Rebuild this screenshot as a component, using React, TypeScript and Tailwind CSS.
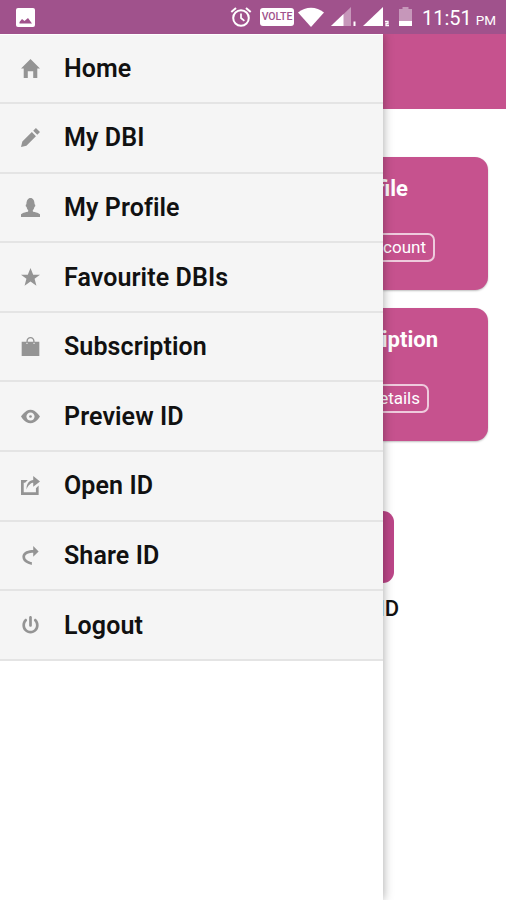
import React from 'react';

const shapes: Record<string, React.ReactNode> = {
  home: <polygon points="7,0 0,7 2,7 2,14 5,14 5,9 9,9 9,14 12,14 12,7 14,7" />,
  edit: <path d="M1,10l-1,4l4-1l7-7L8,3L1,10z M11,0L9,2l3,3l2-2L11,0z" />,
  user: (
    <path d="M8.851,10.101c-0.18-0.399-0.2-0.763-0.153-1.104C9.383,8.49,9.738,7.621,9.891,6.465C10.493,6.355,10.5,5.967,10.5,5.5c0-0.437-0.008-0.804-0.502-0.94C9.999,4.539,10,4.521,10,4.5c0-2.6-1.2-4.5-3-4.5S4,1.877,4,4.5c0,0.021,0.001,0.039,0.002,0.06C3.508,4.696,3.5,5.063,3.5,5.5c0,0.467,0.007,0.855,0.609,0.965C4.262,7.621,4.617,8.49,5.303,8.997c0.047,0.341,0.026,0.704-0.153,1.104C1.503,10.503,0,12,0,12v2h14v-2C14,12,12.497,10.503,8.851,10.101z" />
  ),
  star: <polygon points="14,5 9,5 7,0 5,5 0,5 4,8 2.625,13 7,10 11.375,13 10,8" />,
  shop: (
    <path d="M10,3.5V3C10,1.3,8.7,0,7,0S4,1.3,4,3v0.5H0.5V14h13V3.5H10z M5,3c0-1.1,0.9-2,2-2s2,0.9,2,2v0.5H5V3z M4,4.2h0.8v0.9H4z M9.2,4.2H10v0.9H9.2z" fillRule="evenodd" />
  ),
  eye: (
    <>
      <path d="M7,2C3,2,0,7,0,7s3,5,7,5s7-5,7-5S11,2,7,2z M7,10c-1.657,0-3-1.344-3-3c0-1.657,1.343-3,3-3s3,1.343,3,3C10,8.656,8.657,10,7,10z" fillRule="evenodd" />
      <circle cx="7" cy="7" r="1" />
    </>
  ),
  action: <path d="M9,5v3l5-4L9,0v3c0,0-5,0-5,7C6,5,9,5,9,5z M11,12H2V5h1l2-2H0v11h13V7l-2,2V12z" />,
  forward: <path d="M13,4L9,0v3C6,3,1,4,1,8c0,5,7,6,7,6v-2c0,0-5-1-5-4s6-3,6-3v3L13,4z" />,
  power: (
    <path d="M11.243,2.408c-0.392-0.401-1.024-0.401-1.415,0c-0.391,0.401-0.391,1.054,0,1.455C10.584,4.642,11,5.675,11,6.773s-0.416,2.133-1.172,2.91c-1.512,1.558-4.145,1.558-5.656,0C3.416,8.904,3,7.872,3,6.773c0-1.099,0.416-2.132,1.172-2.91c0.391-0.401,0.391-1.054,0-1.455c-0.391-0.401-1.023-0.401-1.415,0C1.624,3.574,1,5.125,1,6.773c0,1.647,0.624,3.199,1.757,4.365c1.134,1.166,2.64,1.809,4.243,1.809c1.604,0,3.109-0.645,4.243-1.811C12.376,9.975,13,8.423,13,6.773C13,5.125,12.376,3.574,11.243,2.408zM7,8c0.553,0,1-0.447,1-1V1c0-0.553-0.447-1-1-1S6,0.447,6,1v6C6,7.553,6.447,8,7,8z" />
  ),
};

const items = [
  { icon: 'home', label: 'Home' },
  { icon: 'edit', label: 'My DBI' },
  { icon: 'user', label: 'My Profile' },
  { icon: 'star', label: 'Favourite DBIs' },
  { icon: 'shop', label: 'Subscription' },
  { icon: 'eye', label: 'Preview ID' },
  { icon: 'action', label: 'Open ID' },
  { icon: 'forward', label: 'Share ID' },
  { icon: 'power', label: 'Logout' },
];

function StatusBar() {
  return (
    <header className="relative z-20 flex h-[34px] shrink-0 items-center bg-[#a0528c] text-white">
      <svg className="ml-4 h-[19px] w-[19px]" viewBox="0 0 19 19">
        <rect width="19" height="19" rx="2" fill="#fff" />
        <path d="M3.500 15.500v-1.500l2.500-3 2.500 2L12 10l4 5.500z" fill="#a0528c" />
      </svg>
      <svg className="ml-[195px] h-[22px] w-[22px]" viewBox="0 0 22 22" fill="none" stroke="#fff">
        <circle cx="11" cy="12" r="7.8" strokeWidth="2" />
        <path d="M11 7.5V12l3.4 2.800" strokeWidth="1.7" />
        <path d="M1.3 6L6 2M16 2l4.700 4" strokeWidth="2" />
      </svg>
      <span className="ml-[8px] flex h-[18px] w-[34px] items-center justify-center rounded-[3px] bg-white text-[10.5px] leading-none font-medium text-[#a0528c]">
        VOLTE
      </span>
      <svg className="ml-[4px] h-[20px] w-[26px]" viewBox="0 0 26 20">
        <path d="M0 5.5C7.5-1 18.500-1 26 5.500L13 20z" fill="#fff" />
      </svg>
      <svg className="ml-[7px] h-[20px] w-[28px]" viewBox="0 0 28 20">
        <path d="M0 19L20 0v19z" fill="#fff" opacity=".4" />
        <path d="M0 19L12.500 7v12z" fill="#fff" />
        <rect x="22.500" y="14.500" width="2" height="4.500" fill="#fff" />
      </svg>
      <svg className="ml-[4px] h-[20px] w-[28px]" viewBox="0 0 28 20">
        <path d="M0 19L20 0v19z" fill="#fff" />
        <path d="M22 14.500h3v2h-2v2h3" fill="none" stroke="#fff" strokeWidth="1.300" />
      </svg>
      <svg className="ml-[8px] h-[20px] w-[13px]" viewBox="0 0 13 20">
        <path d="M3.500 0h6v2H13v12H0V2h3.500z" fill="#fff" opacity=".4" />
        <path d="M0 14h13v5H0z" fill="#fff" />
      </svg>
      <span className="ml-[10px] pt-[2px] text-[20px] leading-none whitespace-nowrap">
        11:51<span className="ml-[4px] text-[13.5px]">PM</span>
      </span>
    </header>
  );
}

function Drawer() {
  return (
    <nav className="z-10 w-[383px] shrink-0 bg-white pt-[0.5px] shadow-[0_0_10px_rgba(0,0,0,0.36)]">
      {items.map((item) => (
        <div key={item.label} className="flex h-[69.6px] items-center border-b-2 border-[#e4e4e4] bg-[#f5f5f5] pl-[20.5px]">
          <svg className="h-[19px] w-[19px] shrink-0" viewBox="0 0 14 14" fill="#949494">
            {shapes[item.icon]}
          </svg>
          <span className="ml-[24.5px] text-[25px] leading-none font-semibold tracking-[0.1px] whitespace-nowrap text-[#111]">{item.label}</span>
        </div>
      ))}
    </nav>
  );
}

function Card({ title, action, titleGap, actionGap }: { title: string; action: string; titleGap: string; actionGap: string }) {
  return (
    <section className="mr-[18px] flex h-[132.5px] flex-col items-end overflow-hidden rounded-r-[13px] bg-[#c6528e] text-white shadow-[0_1px_2px_rgba(0,0,0,0.25)]">
      <h2 className={'mt-[19px] text-[22px] leading-[25px] font-bold whitespace-nowrap ' + titleGap}>{title}</h2>
      <span className={'mt-[32px] flex h-[29px] items-center rounded-[7px] border-2 border-white/70 px-[7px] text-[17px] leading-none whitespace-nowrap ' + actionGap}>
        {action}
      </span>
    </section>
  );
}

export default function App() {
  return (
    <div className="flex h-[900px] w-[506px] flex-col overflow-hidden bg-white font-['Roboto',sans-serif]">
      <StatusBar />
      <div className="flex min-h-0 flex-1">
        <Drawer />
        <main className="flex min-w-0 flex-1 flex-col overflow-hidden">
          <div className="h-[74.5px] shrink-0 bg-[#c6528e]" />
          <div className="mt-[48.5px] flex flex-col gap-[18.5px]">
            <Card title="Profile" action="Account" titleGap="mr-[80px]" actionGap="mr-[53px]" />
            <Card title="Subscription" action="Details" titleGap="mr-[50px]" actionGap="mr-[59px]" />
          </div>
          <div className="mt-[70px] h-[72px] w-[11px] rounded-r-[11px] bg-[#bc4688]" />
          <div className="mt-[12px] mr-[107px] flex justify-end overflow-hidden text-[22px] leading-[28px] font-medium whitespace-nowrap text-[#111]">
            ID
          </div>
        </main>
      </div>
    </div>
  );
}
